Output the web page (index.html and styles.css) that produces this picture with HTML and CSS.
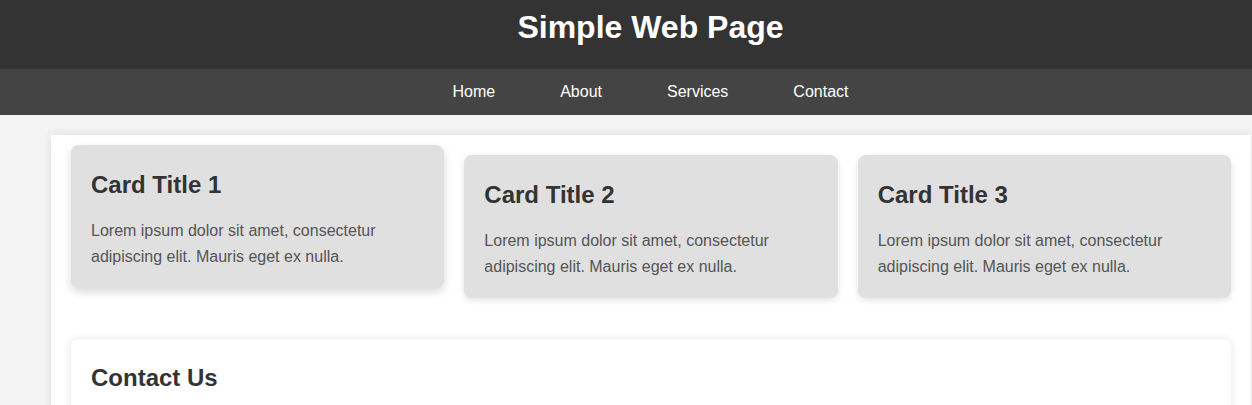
FILE: index.html
```html
<!DOCTYPE html>
<html lang="en">
<head>
<meta charset="utf-8">
<title>Simple Web Page</title>
<link rel="stylesheet" href="styles.css">
</head>
<body>
<div class="page">
  <header class="site-header">
    <h1 class="site-title">Simple Web Page</h1>
  </header>
  <nav class="site-nav">
    <a href="#" class="nav-link">Home</a>
    <a href="#" class="nav-link">About</a>
    <a href="#" class="nav-link">Services</a>
    <a href="#" class="nav-link">Contact</a>
  </nav>
  <main class="container">
    <section class="cards">
      <article class="card card-hover">
        <h2 class="card-title">Card Title 1</h2>
        <p class="card-text">Lorem ipsum dolor sit amet, consectetur adipiscing elit. Mauris eget ex nulla.</p>
      </article>
      <article class="card">
        <h2 class="card-title">Card Title 2</h2>
        <p class="card-text">Lorem ipsum dolor sit amet, consectetur adipiscing elit. Mauris eget ex nulla.</p>
      </article>
      <article class="card">
        <h2 class="card-title">Card Title 3</h2>
        <p class="card-text">Lorem ipsum dolor sit amet, consectetur adipiscing elit. Mauris eget ex nulla.</p>
      </article>
    </section>
    <section class="contact">
      <h2 class="contact-title">Contact Us</h2>
    </section>
  </main>
</div>
</body>
</html>
```
FILE: styles.css
```css
html {
  overflow: hidden;
}
body {
  margin: 0;
  background: #f4f4f4;
  font-family: "Liberation Sans", Arial, sans-serif;
  line-height: 1.6;
  color: #333;
}
.page {
  width: 1301px;
}
.site-header {
  background: #333;
  color: #fff;
  text-align: center;
  height: 69px;
  box-sizing: border-box;
  padding-top: 9px;
}
.site-title {
  margin: 0;
  font-size: 32px;
  line-height: 37px;
  font-weight: bold;
}
.site-nav {
  background: #444;
  display: flex;
  justify-content: center;
  gap: 65px;
  padding: 10px 0;
  height: 46px;
  box-sizing: border-box;
}
.nav-link {
  color: #fff;
  text-decoration: none;
  font-size: 16px;
  line-height: 25.6px;
}
.container {
  width: 1200px;
  box-sizing: border-box;
  margin: 20px 0 0 51px;
  padding: 20px;
  background: #fff;
  box-shadow: 0 0 10px rgba(0, 0, 0, 0.1);
  min-height: 400px;
}
.cards {
  display: grid;
  grid-template-columns: repeat(3, 1fr);
  gap: 20px;
  align-items: start;
}
.card {
  background: #e0e0e0;
  border-radius: 8px;
  padding: 21px 20px 18px;
  box-shadow: 0 2px 6px rgba(0, 0, 0, 0.12);
}
.card-hover {
  transform: translateY(-10px);
  box-shadow: 0 4px 10px rgba(0, 0, 0, 0.15);
}
.card-title,
.contact-title {
  margin: 0 0 14px;
  font-size: 24px;
  font-weight: bold;
  color: #333;
  line-height: 1.6;
}
.card-text {
  margin: 0;
  font-size: 16px;
  color: #555;
}
.contact {
  margin-top: 41px;
  background: #fff;
  border-radius: 8px;
  padding: 20px;
  min-height: 120px;
  box-shadow: 0 0 10px rgba(0, 0, 0, 0.1);
}
```
